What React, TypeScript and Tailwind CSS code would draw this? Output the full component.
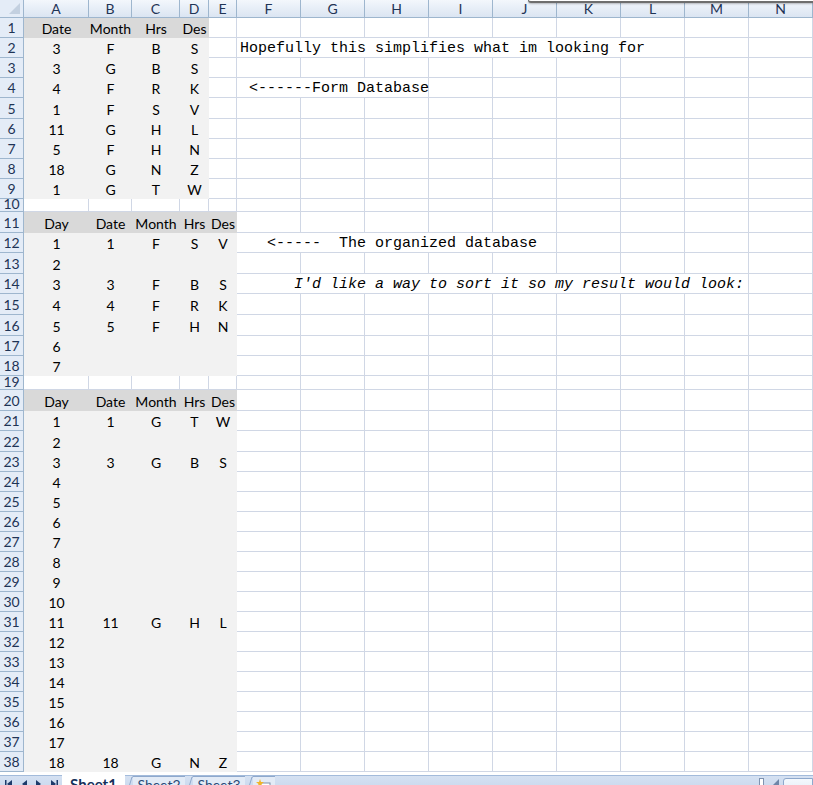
import React from 'react';

type Row = {
  n: number;
  h: string;
  vals?: string[];
  fill: number; // how many of A-E are filled
  head?: boolean;
  short?: boolean;
  note?: { text: string; span: string; cols: number; italic?: boolean };
};

const COLS = 'grid grid-cols-[24px_65px_43px_48px_29px_28px_repeat(9,64px)]';
const LETTERS = ['A', 'B', 'C', 'D', 'E', 'F', 'G', 'H', 'I', 'J', 'K', 'L', 'M', 'N'];

const rows: Row[] = [
  { n: 1, h: 'h-[20px]', vals: ['Date', 'Month', 'Hrs', 'Des'], fill: 4, head: true },
  { n: 2, h: 'h-[20px]', vals: ['3', 'F', 'B', 'S'], fill: 4, note: { text: 'Hopefully this simplifies what im looking for', span: 'col-span-7', cols: 7 } },
  { n: 3, h: 'h-[20px]', vals: ['3', 'G', 'B', 'S'], fill: 4 },
  { n: 4, h: 'h-[20px]', vals: ['4', 'F', 'R', 'K'], fill: 4, note: { text: ' <------Form Database', span: 'col-span-3', cols: 3 } },
  { n: 5, h: 'h-[21px]', vals: ['1', 'F', 'S', 'V'], fill: 4 },
  { n: 6, h: 'h-[20px]', vals: ['11', 'G', 'H', 'L'], fill: 4 },
  { n: 7, h: 'h-[20px]', vals: ['5', 'F', 'H', 'N'], fill: 4 },
  { n: 8, h: 'h-[20px]', vals: ['18', 'G', 'N', 'Z'], fill: 4 },
  { n: 9, h: 'h-[20px]', vals: ['1', 'G', 'T', 'W'], fill: 4 },
  { n: 10, h: 'h-[13px]', fill: 0, short: true },
  { n: 11, h: 'h-[21px]', vals: ['Day', 'Date', 'Month', 'Hrs', 'Des'], fill: 5, head: true },
  { n: 12, h: 'h-[20px]', vals: ['1', '1', 'F', 'S', 'V'], fill: 5, note: { text: '   <-----  The organized database', span: 'col-span-5', cols: 5 } },
  { n: 13, h: 'h-[21px]', vals: ['2'], fill: 5 },
  { n: 14, h: 'h-[20px]', vals: ['3', '3', 'F', 'B', 'S'], fill: 5, note: { text: "      I'd like a way to sort it so my result would look:", span: 'col-span-8', cols: 8, italic: true } },
  { n: 15, h: 'h-[21px]', vals: ['4', '4', 'F', 'R', 'K'], fill: 5 },
  { n: 16, h: 'h-[21px]', vals: ['5', '5', 'F', 'H', 'N'], fill: 5 },
  { n: 17, h: 'h-[20px]', vals: ['6'], fill: 5 },
  { n: 18, h: 'h-[20px]', vals: ['7'], fill: 5 },
  { n: 19, h: 'h-[14px]', fill: 0, short: true },
  { n: 20, h: 'h-[21px]', vals: ['Day', 'Date', 'Month', 'Hrs', 'Des'], fill: 5, head: true },
  { n: 21, h: 'h-[20px]', vals: ['1', '1', 'G', 'T', 'W'], fill: 5 },
  { n: 22, h: 'h-[21px]', vals: ['2'], fill: 5 },
  { n: 23, h: 'h-[20px]', vals: ['3', '3', 'G', 'B', 'S'], fill: 5 },
  { n: 24, h: 'h-[20px]', vals: ['4'], fill: 5 },
  { n: 25, h: 'h-[20px]', vals: ['5'], fill: 5 },
  { n: 26, h: 'h-[20px]', vals: ['6'], fill: 5 },
  { n: 27, h: 'h-[20px]', vals: ['7'], fill: 5 },
  { n: 28, h: 'h-[20px]', vals: ['8'], fill: 5 },
  { n: 29, h: 'h-[20px]', vals: ['9'], fill: 5 },
  { n: 30, h: 'h-[20px]', vals: ['10'], fill: 5 },
  { n: 31, h: 'h-[20px]', vals: ['11', '11', 'G', 'H', 'L'], fill: 5 },
  { n: 32, h: 'h-[20px]', vals: ['12'], fill: 5 },
  { n: 33, h: 'h-[20px]', vals: ['13'], fill: 5 },
  { n: 34, h: 'h-[20px]', vals: ['14'], fill: 5 },
  { n: 35, h: 'h-[20px]', vals: ['15'], fill: 5 },
  { n: 36, h: 'h-[20px]', vals: ['16'], fill: 5 },
  { n: 37, h: 'h-[20px]', vals: ['17'], fill: 5 },
  { n: 38, h: 'h-[20px]', vals: ['18', '18', 'G', 'N', 'Z'], fill: 5 },
];

const SheetRow = ({ r }: { r: Row }) => {
  const dataCells = [0, 1, 2, 3, 4].map((i) => {
    const v = r.vals?.[i] ?? '';
    if (i < r.fill) {
      return (
        <div
          key={i}
          className={`flex items-center justify-center pt-[2px] ${r.head ? 'bg-[#d9d9d9]' : 'bg-[#f2f2f2]'}`}
        >
          {v}
        </div>
      );
    }
    return <div key={i} className="border-r border-b border-[#d0d7e5] bg-white" />;
  });

  const rest: React.ReactNode[] = [];
  let used = 0;
  if (r.note) {
    rest.push(
      <div
        key="note"
        className={`${r.note.span} flex items-center border-r border-b border-[#d0d7e5] bg-white pt-[3px] pl-[3px] font-['Liberation_Mono',monospace] text-[15px] leading-[16px] whitespace-pre text-black ${r.note.italic ? 'italic' : ''}`}
      >
        {r.note.text}
      </div>
    );
    used = r.note.cols;
  }
  for (let i = used; i < 9; i++) {
    rest.push(<div key={i} className="border-r border-b border-[#d0d7e5] bg-white" />);
  }

  return (
    <div className={`${COLS} ${r.h} shrink-0 overflow-hidden text-[14px] leading-[16px] text-black`}>
      <div
        className={`flex justify-center overflow-hidden border-r border-b border-[#9eb6ce] bg-[#e4ecf7] text-[#1f3456] ${r.short ? 'items-end leading-[14px]' : 'items-center pt-[1px]'}`}
      >
        {r.n}
      </div>
      {dataCells}
      {rest}
    </div>
  );
};

const Arrow = ({ dir, bar }: { dir: 'l' | 'r'; bar?: boolean }) => (
  <svg width="10" height="10" viewBox="0 0 10 10" className="shrink-0">
    {dir === 'l' ? (
      <>
        {bar && <rect x="1" y="1" width="1.5" height="8" fill="#1d3b6b" />}
        <path d="M8 1 L3 5 L8 9 Z" fill="#1d3b6b" />
      </>
    ) : (
      <>
        <path d="M2 1 L7 5 L2 9 Z" fill="#1d3b6b" />
        {bar && <rect x="7.5" y="1" width="1.5" height="8" fill="#1d3b6b" />}
      </>
    )}
  </svg>
);

const Slant = () => (
  <svg width="8" height="24" viewBox="0 0 8 24" className="shrink-0">
    <path d="M0 24 L7 1 L8 1" stroke="#8ea8cc" strokeWidth="1" fill="none" />
  </svg>
);

const TabBar = () => (
  <div className="relative mt-[3px] flex h-[24px] shrink-0 items-start border-t border-[#a3bbdb] bg-gradient-to-b from-[#d5e1f2] to-[#c0d2ea] font-['Lato',sans-serif] text-[14px] leading-[16px]">
    <div className="flex w-[62px] items-center gap-[5px] pl-[4px] pt-[3px]">
      <Arrow dir="l" bar />
      <Arrow dir="l" />
      <Arrow dir="r" />
      <Arrow dir="r" bar />
    </div>
    <div className="-mt-px flex h-[24px] w-[63px] justify-center bg-white pt-px text-[15px] font-bold text-[#15305a]">
      Sheet1
    </div>
    <Slant />
    <div className="flex h-[24px] w-[52px] justify-center border-t border-[#8ea8cc] bg-[#e3ebf6] text-[#2a4a78]">
      Sheet2
    </div>
    <Slant />
    <div className="flex h-[24px] w-[52px] justify-center border-t border-[#8ea8cc] bg-[#e3ebf6] text-[#2a4a78]">
      Sheet3
    </div>
    <Slant />
    <div className="flex h-[24px] w-[22px] items-start justify-center border-t border-[#8ea8cc] bg-[#e3ebf6] pt-[2px]">
      <svg width="16" height="14" viewBox="0 0 16 14">
        <rect x="4" y="4" width="10" height="9" fill="#fff" stroke="#7d8fa8" />
        <path d="M4 0 L5 3 L8 3 L5.5 5 L6.5 8 L4 6 L1.5 8 L2.5 5 L0 3 L3 3 Z" fill="#f0b429" />
      </svg>
    </div>
    <div className="flex-1" />
    <div className="mt-[2px] h-[12px] w-[5px] border border-[#7f93b0] bg-white" />
    <div className="ml-[7px] mt-[3px] h-0 w-0 border-b-[8px] border-l-[8px] border-b-[#6f86a8] border-l-transparent" />
    <div className="ml-[4px] mt-[2px] h-[22px] w-[30px] rounded-tl-[3px] border border-[#8ea8cc] bg-gradient-to-b from-[#f4f8fd] to-[#dce7f5]" />
  </div>
);

export default function App() {
  return (
    <div className="relative flex h-[785px] w-[813px] flex-col overflow-hidden bg-white font-['Lato',sans-serif]">
      <div className={`${COLS} h-[18px] shrink-0 text-[14px] leading-[16px] text-[#1f3456]`}>
        <div className="relative border-r border-b border-[#9eb6ce] bg-[#e4ecf7]">
          <div className="absolute right-[3px] bottom-[3px] h-0 w-0 border-b-[11px] border-l-[11px] border-b-[#c3d0e0] border-l-transparent" />
        </div>
        {LETTERS.map((l) => (
          <div
            key={l}
            className="flex items-center justify-center border-r border-b border-[#9eb6ce] bg-gradient-to-b from-[#f3f7fc] to-[#dbe5f2]"
          >
            {l}
          </div>
        ))}
      </div>
      {rows.map((r) => (
        <SheetRow key={r.n} r={r} />
      ))}
      <TabBar />
      <div className="absolute top-0 right-0 left-[528px] h-[3px] rounded-bl-[4px] border-b-2 border-l border-[#6e6e6e] bg-white shadow-[0_1px_2px_rgba(0,0,0,0.25)]" />
    </div>
  );
}
